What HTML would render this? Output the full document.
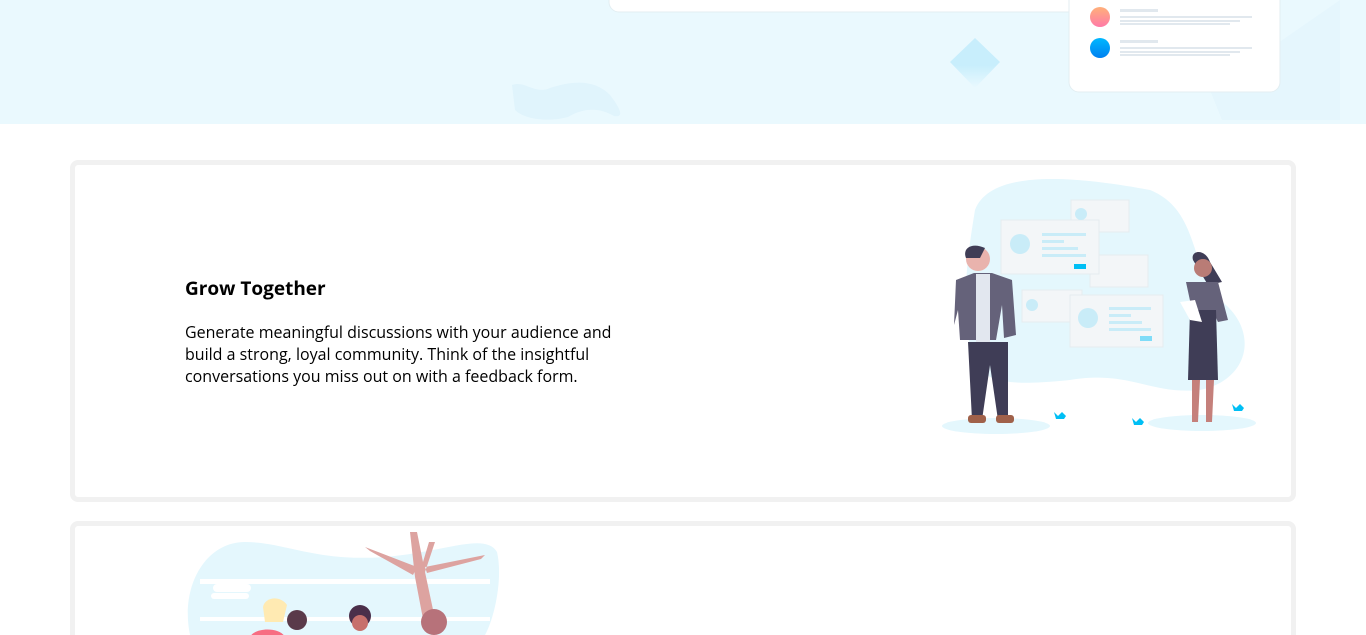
<!DOCTYPE html>
<html style="height:635px;overflow:hidden"><head><style>
body{margin:0;width:1366px;height:635px;overflow:hidden;background:#fff;font-family:"Open Sans","Liberation Sans",sans-serif;position:relative}
.hero{position:absolute;left:0;top:0;width:1366px;height:124px;background:#eaf9fe}
.card{position:absolute;left:70px;width:1216px;border:5px solid #f1f1f1;border-radius:8px;background:#fff}
h2{position:absolute;left:185px;top:275px;margin:0;font-size:19px;font-weight:bold;color:#000}
p{position:absolute;left:185px;top:321px;margin:0;width:440px;font-size:16px;line-height:22px;color:#000}
</style></head><body>
<div class="hero">
<svg width="1366" height="124" style="position:absolute;left:0;top:0">
<defs><linearGradient id="g1" x1="0" y1="0" x2="0" y2="1"><stop offset="0" stop-color="#ffb07a"/><stop offset="1" stop-color="#ff7aa8"/></linearGradient>
<linearGradient id="g2" x1="0" y1="0" x2="0" y2="1"><stop offset="0" stop-color="#00b8ff"/><stop offset="1" stop-color="#0080f0"/></linearGradient>
<linearGradient id="g3" x1="0" y1="0" x2="0" y2="1"><stop offset="0" stop-color="#c8eefc"/><stop offset=".55" stop-color="#c8eefc"/><stop offset="1" stop-color="#eaf9fe"/></linearGradient></defs>
<path d="M1210 90 L1340 0 L1340 120 L1222 120Z" fill="#e5f6fd"/>
<path d="M512 85 C525 80 535 95 550 88 C575 80 595 80 610 95 C620 108 625 118 614 116 C600 108 585 107 568 117 C550 122 525 120 515 110Z" fill="#e0f4fc"/>
<path d="M975 38 L1000 62 L975 88 L950 62Z" fill="url(#g3)"/>
<rect x="609" y="-20" width="490" height="32" rx="10" fill="#fff" stroke="#e3eef2"/>
<rect x="1069" y="-20" width="211" height="112" rx="10" fill="#fff" stroke="#e3eef2"/>
<circle cx="1100" cy="17" r="10" fill="url(#g1)"/>
<circle cx="1100" cy="48" r="10" fill="url(#g2)"/>
<g fill="#e1e8ee"><rect x="1120" y="9" width="38" height="3"/><rect x="1120" y="16" width="132" height="2"/><rect x="1120" y="20" width="120" height="2"/><rect x="1120" y="23" width="110" height="2"/>
<rect x="1120" y="40" width="38" height="3"/><rect x="1120" y="47" width="132" height="2"/><rect x="1120" y="51" width="120" height="2"/><rect x="1120" y="54" width="110" height="2"/></g>
</svg></div>

<div class="card" style="top:160px;height:332px"></div>
<div class="card" style="top:521px;height:120px"></div>
<h2>Grow Together</h2>
<p>Generate meaningful discussions with your audience and build a strong, loyal community. Think of the insightful conversations you miss out on with a feedback form.</p>

<svg width="380" height="280" style="position:absolute;left:900px;top:170px">
<path d="M75 40 C90 0 170 5 250 20 C300 40 290 100 320 130 C360 160 350 210 300 220 C250 225 230 200 170 210 C120 215 90 215 75 195 C60 150 65 100 75 40Z" fill="#e4f7fd"/>
<g fill="#f3f6f8" stroke="#e6ecef"><rect x="171" y="30" width="58" height="32"/><rect x="190" y="85" width="58" height="32"/><rect x="122" y="120" width="60" height="32"/><rect x="101" y="50" width="98" height="54"/><rect x="170" y="125" width="93" height="52"/></g>
<g fill="#c9ecf8"><circle cx="181" cy="44" r="6"/><circle cx="132" cy="135" r="6"/><circle cx="120" cy="74" r="10"/><circle cx="188" cy="148" r="10"/>
<rect x="142" y="63" width="44" height="3"/><rect x="142" y="70" width="22" height="3"/><rect x="142" y="77" width="36" height="3"/><rect x="142" y="84" width="44" height="3"/>
<rect x="209" y="137" width="42" height="3"/><rect x="209" y="144" width="22" height="3"/><rect x="209" y="151" width="33" height="3"/><rect x="209" y="158" width="42" height="3"/></g>
<rect x="174" y="94" width="12" height="5" fill="#00bff5"/><rect x="240" y="166" width="12" height="5" fill="#7fdcf8"/>
<ellipse cx="96" cy="256" rx="54" ry="8" fill="#e4f7fd"/><ellipse cx="302" cy="253" rx="54" ry="8" fill="#e4f7fd"/>
<circle cx="78" cy="89" r="12" fill="#e9b3ad"/><path d="M66 88 C62 78 72 72 85 78 L80 88 Z" fill="#3f3d56"/>
<path d="M56 110 L74 103 L92 103 L112 110 L116 165 L104 168 L102 135 L96 170 L60 170 L58 140 L54 155Z" fill="#65627a"/>
<rect x="76" y="104" width="14" height="70" fill="#e2e7ef"/>
<path d="M68 172 L108 172 L108 250 L98 250 L90 195 L82 250 L72 250Z" fill="#3f3d56"/>
<rect x="68" y="245" width="18" height="8" rx="3" fill="#a0614a"/><rect x="96" y="245" width="18" height="8" rx="3" fill="#a0614a"/>
<path d="M293 90 C290 80 305 78 310 92 L322 112 L308 115Z" fill="#3f3d56"/><circle cx="303" cy="98" r="9" fill="#b97c76"/>
<path d="M286 112 L318 112 L328 150 L318 152 L312 140 L292 140Z" fill="#65627a"/>
<path d="M290 140 L316 140 L318 210 L288 210Z" fill="#3f3d56"/>
<path d="M292 210 L300 210 L298 252 L292 252Z M306 210 L314 210 L312 252 L306 252Z" fill="#c5807b"/>
<path d="M280 132 L295 130 L302 152 L290 150Z" fill="#fff"/>
<g fill="#00bff5"><path d="M154 242 l4 4 l4-4 l4 4 l-2 3 h-8z"/><path d="M232 248 l4 4 l4-4 l4 4 l-2 3 h-8z"/><path d="M332 234 l4 4 l4-4 l4 4 l-2 3 h-8z"/></g>
</svg>

<svg width="320" height="110" style="position:absolute;left:185px;top:527px">
<path d="M5 108 C-5 60 20 15 60 15 C100 15 130 35 200 30 C260 25 300 5 312 25 C318 50 310 90 300 108Z" fill="#e4f7fd"/>
<rect x="15" y="52" width="290" height="5" fill="#fff"/><rect x="15" y="90" width="290" height="4" fill="#fff"/>
<rect x="28" y="57" width="38" height="8" rx="4" fill="#fff"/><rect x="26" y="66" width="38" height="6" rx="3" fill="#fff"/>
<path d="M225 5 L230 50 L238 92 L250 92 L240 45 L250 15 L244 15 L238 35 L232 5Z M232 40 L180 20 L185 24 L228 48Z M240 40 L300 28 L296 32 L242 46Z" fill="#dda3a0"/>
<path d="M78 80 C80 70 95 68 102 78 L98 95 L80 95Z" fill="#ffeab2"/><circle cx="112" cy="93" r="10" fill="#5a3a4a"/>
<path d="M65 110 C70 100 95 100 100 110Z" fill="#f76d82"/>
<circle cx="175" cy="89" r="11" fill="#4a2f4a"/><circle cx="175" cy="96" r="8" fill="#c7706c"/>
<circle cx="249" cy="95" r="13" fill="#b7727a"/>
</svg>
</body></html>
